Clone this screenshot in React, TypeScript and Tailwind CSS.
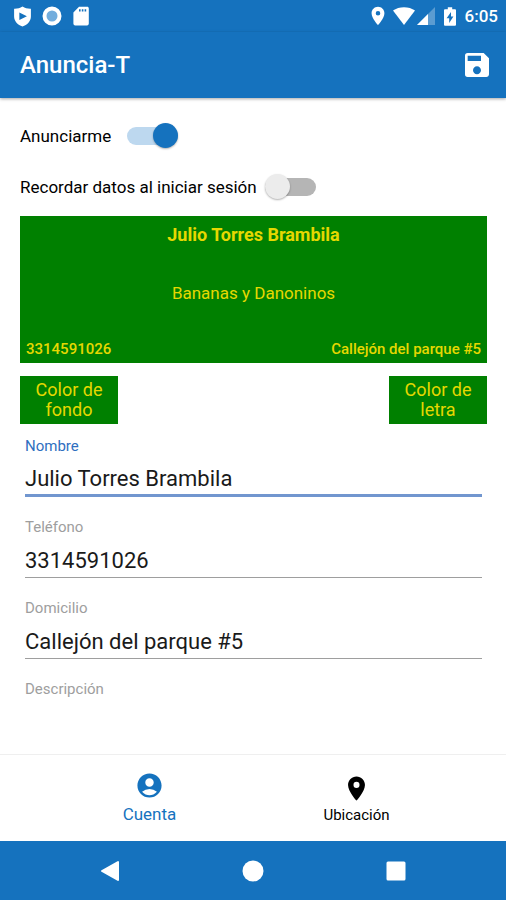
import React, { useState } from "react";
import { MdAccountCircle, MdLocationOn, MdSave } from "react-icons/md";

export default function App() {
  const [name, setName] = useState("Julio Torres Brambila");
  const [phone, setPhone] = useState("3314591026");
  const [address, setAddress] = useState("Callejón del parque #5");
  const [description, setDescription] = useState("");

  return (
    <div className="flex min-h-screen flex-col bg-white font-[Roboto,sans-serif] text-black">
      <StatusBar />
      <header className="z-10 flex h-[66px] items-center justify-between bg-[#1572be] pl-5 pr-[13px] text-white shadow-[0_1px_3px_rgba(0,0,0,0.35)]">
        <h1 className="text-[24px] font-medium leading-8">Anuncia-T</h1>
        <button type="button" aria-label="Guardar">
          <MdSave className="h-8 w-8" />
        </button>
      </header>

      <main className="flex flex-1 flex-col pl-5 pr-[19px] pt-[25px]">
        <div className="flex flex-col gap-[25px]">
          <Toggle id="announce" label="Anunciarme" gap="gap-4" defaultChecked />
          <Toggle id="remember" label="Recordar datos al iniciar sesión" gap="gap-2" />
        </div>

        <section className="mt-4 flex h-[147px] flex-col items-center justify-between bg-[#008000] px-[6px] pb-1 pt-[7px] text-[#e6d800]">
          <h2 className="text-[18px] font-bold leading-6">{name}</h2>
          <p className="text-[17px] leading-6">Bananas y Danoninos</p>
          <div className="flex w-full justify-between text-[15px] font-medium leading-5">
            <span>{phone}</span>
            <span>{address}</span>
          </div>
        </section>

        <div className="mt-[13px] flex justify-between">
          <ColorButton label="Color de fondo" />
          <ColorButton label="Color de letra" />
        </div>

        <form className="mt-3 flex flex-col gap-5 px-[5px]">
          <Field id="name" label="Nombre" value={name} onChange={setName} active />
          <Field id="phone" label="Teléfono" value={phone} onChange={setPhone} />
          <Field id="address" label="Domicilio" value={address} onChange={setAddress} />
          <div className="flex flex-col">
            <label htmlFor="description" className="text-[15px] leading-5 text-[#9e9e9e]">
              Descripción
            </label>
            <textarea
              id="description"
              rows={1}
              value={description}
              onChange={(e) => setDescription(e.target.value)}
              className="h-10 resize-none text-[22px] outline-none"
            />
          </div>
        </form>
      </main>

      <nav className="flex h-[87px] justify-center border-t border-[#efefef] bg-white">
        <a href="#cuenta" className="flex w-[207px] flex-col items-center pt-4 text-[#1572be]">
          <MdAccountCircle className="h-[29px] w-[29px]" />
          <span className="text-[17px] leading-7">Cuenta</span>
        </a>
        <a href="#ubicacion" className="flex w-[207px] flex-col items-center pt-[19px]">
          <MdLocationOn className="h-[29px] w-[29px]" />
          <span className="text-[15px] leading-6">Ubicación</span>
        </a>
      </nav>
      <SystemNav />
    </div>
  );
}

function StatusBar() {
  return (
    <div className="flex h-8 items-center justify-between bg-[#1572be] pl-3 pr-2 text-white">
      <div className="flex items-center gap-[9px]">
        <svg viewBox="0 0 20 20" className="h-[21px] w-[21px]" fill="currentColor">
          <path
            fillRule="evenodd"
            d="M10 0.5 C12.5 2.2 15 2.7 18 2.6 V10 C18 14.6 14.5 18 10 19.5 C5.5 18 2 14.6 2 10 V2.6 C5 2.7 7.5 2.2 10 0.5 Z M7 6.2 V13.4 L14.2 9.8 Z"
          />
        </svg>
        <svg viewBox="0 0 20 20" className="h-5 w-5">
          <circle cx="10" cy="10" r="7.5" fill="#72addd" stroke="#fff" strokeWidth="4" />
        </svg>
        <svg viewBox="0 0 20 20" className="h-5 w-5" fill="currentColor">
          <path
            fillRule="evenodd"
            d="M8 0.8 H16 C17.2 0.8 17.8 1.4 17.8 2.6 V17.6 C17.8 18.8 17.2 19.4 16 19.4 H4.2 C3 19.4 2.4 18.8 2.4 17.6 V6.4 Z M8 3.2 V5.6 H9.6 V3.2 Z M10.8 3.2 V5.6 H12.4 V3.2 Z M13.6 3.2 V5.6 H15.2 V3.2 Z"
          />
        </svg>
      </div>
      <div className="flex items-center">
        <MdLocationOn className="h-[22px] w-[22px]" />
        <svg viewBox="0 0 22 18" className="ml-1 h-[18px] w-[22px]" fill="currentColor">
          <path d="M0 3.5 C6 -1 16 -1 22 3.5 L11 18 Z" />
        </svg>
        <svg viewBox="0 0 18 18" className="ml-[2px] h-[18px] w-[18px]" fill="currentColor">
          <path d="M0 18 L18 0 V18 Z" opacity="0.3" />
          <path d="M0 18 L11 7 V18 Z" />
        </svg>
        <svg viewBox="0 0 12 19" className="ml-[9px] h-[19px] w-3" fill="currentColor">
          <path
            fillRule="evenodd"
            d="M3.8 0.3 H8.2 V2.2 H11 Q12 2.2 12 3.2 V17.8 Q12 18.8 11 18.8 H1 Q0 18.8 0 17.8 V3.2 Q0 2.2 1 2.2 H3.8 Z M7 5 L2.6 11.3 H5.2 V16 L9.4 9.6 H7 Z"
          />
        </svg>
        <span className="ml-[9px] text-[17px] font-medium leading-6">6:05</span>
      </div>
    </div>
  );
}

interface ToggleProps {
  id: string;
  label: string;
  gap: string;
  defaultChecked?: boolean;
}

function Toggle({ id, label, gap, defaultChecked }: ToggleProps) {
  return (
    <div className={`flex h-[26px] items-center ${gap}`}>
      <label htmlFor={id} className="text-[17px] leading-6">
        {label}
      </label>
      <input
        id={id}
        type="checkbox"
        role="switch"
        defaultChecked={defaultChecked}
        className="relative h-[26px] w-[51px] appearance-none before:absolute before:inset-x-0 before:top-1 before:h-[18px] before:rounded-full before:bg-[#b5b5b5] after:absolute after:left-0 after:top-0 after:h-[25px] after:w-[25px] after:rounded-full after:bg-[#ececec] after:shadow-[0_1px_2px_rgba(0,0,0,0.3)] checked:before:bg-[#bdd8ef] checked:after:left-[26px] checked:after:bg-[#1572be]"
      />
    </div>
  );
}

function ColorButton({ label }: { label: string }) {
  return (
    <button
      type="button"
      className="w-[98px] bg-[#008000] px-3 py-1 text-[18px] leading-5 text-[#e6d800]"
    >
      {label}
    </button>
  );
}

interface FieldProps {
  id: string;
  label: string;
  value: string;
  onChange: (value: string) => void;
  active?: boolean;
}

function Field({ id, label, value, onChange, active }: FieldProps) {
  return (
    <div className="flex flex-col">
      <label
        htmlFor={id}
        className={`text-[15px] leading-5 ${active ? "text-[#2f6fc0]" : "text-[#9e9e9e]"}`}
      >
        {label}
      </label>
      <input
        id={id}
        type="text"
        value={value}
        onChange={(e) => onChange(e.target.value)}
        className={`h-[41px] w-full pt-[6px] text-[22px] text-[#1a1a1a] outline-none ${
          active ? "border-b-3 border-[#7196cf]" : "border-b border-[#9e9e9e]"
        }`}
      />
    </div>
  );
}

function SystemNav() {
  return (
    <div className="flex h-[59px] items-center justify-center gap-[121px] bg-[#1572be] text-white">
      <button type="button" aria-label="Atrás">
        <svg viewBox="0 0 22 22" className="h-[22px] w-[22px]" fill="currentColor">
          <path
            d="M19 2 V20 L3 11 Z"
            stroke="currentColor"
            strokeWidth="2"
            strokeLinejoin="round"
          />
        </svg>
      </button>
      <button type="button" aria-label="Inicio">
        <svg viewBox="0 0 22 22" className="h-[22px] w-[22px]" fill="currentColor">
          <circle cx="11" cy="11" r="10.5" />
        </svg>
      </button>
      <button type="button" aria-label="Recientes">
        <svg viewBox="0 0 22 22" className="h-[22px] w-[22px]" fill="currentColor">
          <rect x="1.5" y="1.5" width="19" height="19" rx="1.5" />
        </svg>
      </button>
    </div>
  );
}
